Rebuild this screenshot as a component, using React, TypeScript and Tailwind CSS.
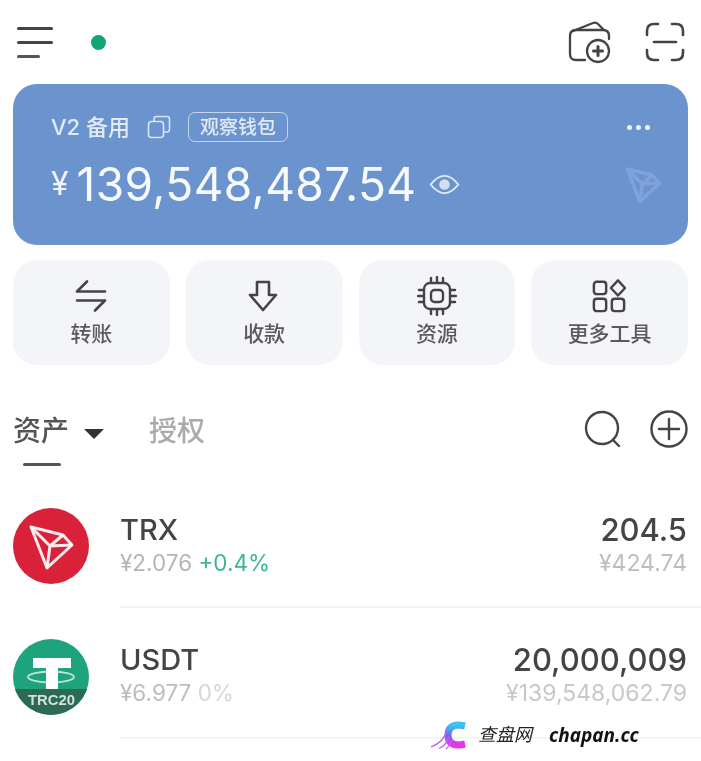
import React from "react";

const TronMark = ({ className, stroke, width }: { className: string; stroke: string; width: string }) => (
  <svg viewBox="0 0 76 76" className={className} fill="none" stroke={stroke} strokeWidth={width} strokeLinejoin="round">
    <path d="M18 19 L50 27 L59 37 L34 60 Z" />
    <path d="M18 19 L37 38 L34 60 M37 38 L59 37 M37 38 L50 27" />
  </svg>
);

const TransferIcon = () => (
  <svg viewBox="0 0 32 32" className="w-8 h-8" fill="none" stroke="#444" strokeWidth="2.6" strokeLinecap="round" strokeLinejoin="round">
    <path d="M2 11.5 H30 M2 11.5 L12 1.5" />
    <path d="M30 20.5 H2 M30 20.5 L20 30.5" />
  </svg>
);

const ReceiveIcon = () => (
  <svg viewBox="0 0 32 32" className="w-8 h-8 -ml-[2px]" fill="none" stroke="#444" strokeWidth="2.6" strokeLinejoin="round">
    <path d="M10 2 H22 V15 H29 L16 30 L3 15 H10 Z" />
  </svg>
);

const ChipIcon = () => (
  <svg viewBox="0 0 40 40" className="w-[40px] h-[40px]" fill="none" stroke="#444" strokeWidth="2.4" strokeLinecap="round">
    <rect x="7" y="7" width="26" height="26" rx="6" />
    <rect x="14" y="14" width="12" height="12" rx="3.5" />
    <path d="M14 2 V6 M20 1 V6 M26 2 V6 M14 34 V38 M20 34 V39 M26 34 V38 M2 14 H6 M1 20 H6 M2 26 H6 M34 14 H38 M34 20 H39 M34 26 H38" />
  </svg>
);

const ToolsIcon = () => (
  <svg viewBox="0 0 36 36" className="w-[34px] h-[34px] -ml-[2px]" fill="none" stroke="#444" strokeWidth="2.6" strokeLinejoin="round">
    <rect x="2" y="3" width="13" height="13" rx="3" />
    <rect x="2" y="21" width="13" height="13" rx="3" />
    <rect x="21" y="21" width="13" height="13" rx="3" />
    <path d="M27.5 1.5 L35 9.5 L27.5 17.5 L20 9.5 Z" />
  </svg>
);

const actions = [
  { label: "转账", icon: <TransferIcon /> },
  { label: "收款", icon: <ReceiveIcon /> },
  { label: "资源", icon: <ChipIcon /> },
  { label: "更多工具", icon: <ToolsIcon /> },
];

const App = () => {
  return (
    <div className="relative w-[701px] h-[761px] overflow-hidden bg-white blur-[0.5px] font-[Inter,'Noto_Sans_CJK_SC',sans-serif]">
      {/* top bar */}
      <div className="h-[84px] flex items-center justify-between pl-[17px] pr-[16px]">
        <div className="flex items-center gap-[38px]">
          <div className="flex flex-col gap-[11px] w-[36px]">
            <div className="h-[3px] w-full rounded-full bg-[#444]"></div>
            <div className="h-[3px] w-full rounded-full bg-[#444]"></div>
            <div className="h-[3px] w-[23px] rounded-full bg-[#555]"></div>
          </div>
          <div className="w-[15px] h-[15px] rounded-full bg-[#12a575]"></div>
        </div>
        <div className="flex items-center gap-[33px]">
          <svg viewBox="0 0 44 44" className="w-[44px] h-[44px]" fill="none" stroke="#444" strokeWidth="2.3" strokeLinecap="round" strokeLinejoin="round">
            <path d="M17 40 H8 Q2 40 2 34 V16 Q2 10 8 10 H35 Q41 10 41 16 V19" />
            <path d="M5 11 L25 3 Q28 2 30 4 L36 10" />
            <circle cx="30" cy="31" r="11" />
            <path d="M25.5 31 H34.5 M30 26.5 V35.5" strokeWidth="3" />
          </svg>
          <svg viewBox="0 0 40 40" className="w-[40px] h-[40px]" fill="none" stroke="#444" strokeWidth="2.6" strokeLinecap="round">
            <path d="M2 13 V9 Q2 2 9 2 H13 M27 2 H31 Q38 2 38 9 V13 M2 28 V31 Q2 38 9 38 H13 M38 28 V31 Q38 38 31 38 H27" />
            <path d="M9 20 H31" />
          </svg>
        </div>
      </div>

      {/* wallet card */}
      <div className="mx-[13px] h-[161px] rounded-[24px] bg-[#6b94ce] pl-[38px] pr-[38px] pt-[28px] text-white">
        <div className="flex items-center h-[30px]">
          <span className="text-[22px] font-medium text-white/80 leading-none">V2 备用</span>
          <svg viewBox="0 0 24 24" className="ml-[17px] w-[24px] h-[24px]" fill="none" stroke="#ffffff" strokeOpacity="0.75" strokeWidth="1.6">
            <rect x="1.5" y="6.5" width="15" height="16" rx="3" />
            <path d="M7 6 V4 Q7 1.5 9.5 1.5 H20 Q22.5 1.5 22.5 4 V14 Q22.5 17 20 17 H17" />
          </svg>
          <div className="ml-[17px] w-[100px] h-[30px] rounded-[7px] border border-white/60 flex items-center justify-center text-[19px] font-medium text-white/80 leading-none">
            观察钱包
          </div>
          <div className="ml-auto flex gap-[4px]">
            <div className="w-[5px] h-[5px] rounded-full bg-white/90"></div>
            <div className="w-[5px] h-[5px] rounded-full bg-white/90"></div>
            <div className="w-[5px] h-[5px] rounded-full bg-white/90"></div>
          </div>
        </div>
        <div className="flex items-center h-[56px] mt-[14px]">
          <span className="text-[32px] leading-none text-white/90 mr-[8px]">¥</span>
          <span className="text-[46px] leading-[56px] text-white/95 tracking-[0.4px]">139,548,487.54</span>
          <svg viewBox="0 0 32 22" className="ml-[13px] w-[31px] h-[21px]" fill="none" stroke="#ffffff" strokeOpacity="0.8" strokeWidth="2">
            <path d="M1.5 11 Q16 -7 30.5 11 Q16 29 1.5 11 Z" />
            <circle cx="16" cy="11" r="5.5" fill="#ffffff" fillOpacity="0.7" stroke="none" />
          </svg>
          <TronMark className="ml-auto -mr-[23px] w-[60px] h-[60px] shrink-0" stroke="#7fa3d9" width="4.5" />
        </div>
      </div>

      {/* actions */}
      <div className="mx-[13px] mt-[15px] grid grid-cols-4 gap-[16px]">
        {actions.map((item) => (
          <div key={item.label} className="h-[105px] rounded-[24px] bg-[#f4f5f9] flex flex-col items-center justify-end pb-[17px]">
            <div className="h-[42px] flex items-center justify-center">{item.icon}</div>
            <span className="mt-[3px] text-[21px] font-medium leading-[28px] text-[#5a5a5a]">{item.label}</span>
          </div>
        ))}
      </div>

      {/* tabs */}
      <div className="mt-[46px] pl-[13px] pr-[13px] flex items-start justify-between h-[66px]">
        <div>
          <div className="flex items-center h-[40px]">
            <span className="text-[28px] font-medium leading-none text-[#555]">资产</span>
            <div className="ml-[15px] mt-[6px] w-0 h-0 border-x-[10px] border-x-transparent border-t-[10px] border-t-[#333]"></div>
            <span className="ml-[45px] text-[28px] font-medium leading-none text-[#aaaaaa]">授权</span>
          </div>
          <div className="ml-[10px] mt-[12px] w-[38px] h-[3px] rounded-full bg-[#555]"></div>
        </div>
        <div className="flex items-center gap-[28px] -mt-[1px]">
          <svg viewBox="0 0 38 38" className="w-[38px] h-[38px]" fill="none" stroke="#444" strokeWidth="2.4" strokeLinecap="round">
            <circle cx="18" cy="18" r="16" />
            <path d="M29 30 L35 36" />
          </svg>
          <svg viewBox="0 0 38 38" className="w-[38px] h-[38px]" fill="none" stroke="#444" strokeWidth="2.4" strokeLinecap="round">
            <circle cx="19" cy="19" r="17.5" />
            <path d="M9 19 H29 M19 9 V29" />
          </svg>
        </div>
      </div>

      {/* token list */}
      <div className="pl-[13px]">
        <div className="h-[131px] pt-[7px] flex items-center">
          <svg viewBox="0 0 76 76" className="w-[76px] h-[76px] shrink-0">
            <circle cx="38" cy="38" r="38" fill="#d9213a" />
            <g fill="none" stroke="#ffffff" strokeOpacity="0.9" strokeWidth="3" strokeLinejoin="round">
              <path d="M18 19 L50 27 L59 37 L34 60 Z" />
              <path d="M18 19 L37 38 L34 60 M37 38 L59 37 M37 38 L50 27" />
            </g>
          </svg>
          <div className="ml-[31px] flex-1 -mt-[7px] pt-[7px] h-[131px] border-b-2 border-[#f5f5f5] flex items-center justify-between pr-[14px]">
            <div>
              <div className="text-[29px] font-medium leading-[36px] text-[#444]">TRX</div>
              <div className="text-[22.5px] leading-[30px] text-[#b5b5b5]">
                ¥2.076 <span className="text-[#3fb594]">+0.4%</span>
              </div>
            </div>
            <div className="text-right">
              <div className="text-[31px] font-medium leading-[36px] text-[#444]">204.5</div>
              <div className="text-[23px] leading-[30px] text-[#bdbdbd]">¥424.74</div>
            </div>
          </div>
        </div>
        <div className="h-[131px] pt-[7px] flex items-center">
          <svg viewBox="0 0 76 76" className="w-[76px] h-[76px] shrink-0">
            <defs>
              <clipPath id="usdt-clip">
                <circle cx="38" cy="38" r="38" />
              </clipPath>
            </defs>
            <circle cx="38" cy="38" r="38" fill="#1fa37d" />
            <ellipse cx="38" cy="38" rx="23" ry="5.5" fill="none" stroke="#ffffff" strokeOpacity="0.7" strokeWidth="1.8" />
            <path d="M20 19 H58 V29 H45 V50 H33 V29 H20 Z" fill="#ffffff" />
            <rect x="0" y="50" width="76" height="26" fill="#2d6a55" clipPath="url(#usdt-clip)" />
            <text x="38.5" y="65.5" textAnchor="middle" fontSize="15.5" fontWeight="700" fill="#ffffff" fillOpacity="0.8" fontFamily="Liberation Sans, sans-serif" textLength="47" lengthAdjust="spacingAndGlyphs">TRC20</text>
          </svg>
          <div className="ml-[31px] flex-1 -mt-[7px] pt-[5px] h-[131px] border-b-2 border-[#f5f5f5] flex items-center justify-between pr-[14px]">
            <div>
              <div className="text-[29px] font-medium leading-[36px] text-[#444]">USDT</div>
              <div className="text-[22.5px] leading-[30px] text-[#bdbdbd]">
                ¥6.977 <span className="text-[#d6d6d6]">0%</span>
              </div>
            </div>
            <div className="text-right">
              <div className="text-[31px] font-medium leading-[36px] text-[#444]">20,000,009</div>
              <div className="text-[23px] leading-[30px] text-[#c8c8c8]">¥139,548,062.79</div>
            </div>
          </div>
        </div>
      </div>

      {/* watermark */}
      <div className="absolute left-[431px] top-[720px] flex items-center">
        <svg viewBox="0 0 36 30" className="w-[36px] h-[30px]" fill="none">
          <defs>
            <linearGradient id="wm-c" x1="0" y1="0" x2="0" y2="1">
              <stop offset="0" stopColor="#38c8f0" />
              <stop offset="0.5" stopColor="#6a6cf5" />
              <stop offset="1" stopColor="#f032e0" />
            </linearGradient>
          </defs>
          <path d="M34 6 Q30 5 27 5 Q17 5.5 17 15 Q17 24.5 27 25 Q30 25 34 24" stroke="url(#wm-c)" strokeWidth="7" />
          <path d="M16 10 Q13 22 0 27 M18 16 Q16 25 8 28.5 M20 20 Q19 26 15 29" stroke="#c060f0" strokeWidth="1.3" />
        </svg>
        <span className="ml-[11px] text-[18px] italic text-[#222] leading-none">查盘网</span>
        <span className="ml-[17px] text-[19px] font-bold italic text-[#111] leading-none font-['Open_Sans',sans-serif]">chapan.cc</span>
      </div>
    </div>
  );
};

export default App;
